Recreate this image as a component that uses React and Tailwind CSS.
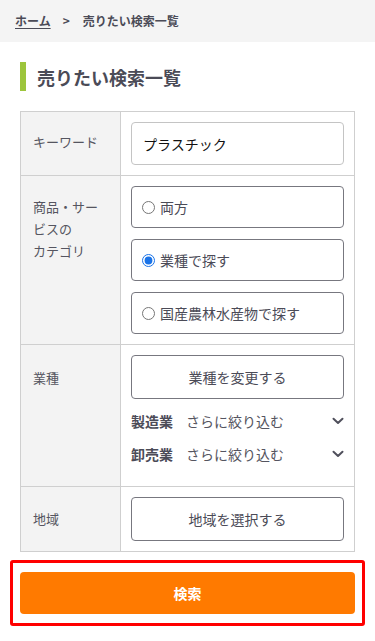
import { useState } from "react";

function Chevron() {
  return (
    <svg width="12" height="8" viewBox="0 0 12 8" className="shrink-0">
      <path d="M1.5 1.8 L6 6 L10.5 1.8" fill="none" stroke="#50505c" strokeWidth="2" strokeLinecap="round" strokeLinejoin="round" />
    </svg>
  );
}

export default function App() {
  const [category, setCategory] = useState("industry");
  const [keyword, setKeyword] = useState("プラスチック");

  const options = [
    { value: "both", label: "両方" },
    { value: "industry", label: "業種で探す" },
    { value: "agri", label: "国産農林水産物で探す" },
  ];

  return (
    <main className="min-h-[641px] bg-white text-[#4b4b57] font-['Noto_Sans_CJK_JP','Noto_Sans',sans-serif]">
      {/* Breadcrumb */}
      <nav className="h-[42px] bg-[#f4f4f4] flex items-center pl-[15px] text-[12px] font-bold text-[#4b4b57]">
        <a href="#" className="underline underline-offset-2">ホーム</a>
        <span className="ml-[12px] mr-[13px] text-[12px]">&gt;</span>
        <span>売りたい検索一覧</span>
      </nav>

      {/* Heading */}
      <div className="mx-5 mt-5 flex items-center h-[29px]">
        <div className="w-[6px] h-[29px] bg-[#9dc53c]"></div>
        <h1 className="ml-[11px] text-[18px] font-bold text-[#4b4b57] leading-none">売りたい検索一覧</h1>
      </div>

      {/* Form table */}
      <div className="mx-5 mt-5 border border-[#cfcfcf] text-[13px]">
        {/* Keyword */}
        <div className="flex border-b border-[#cfcfcf]">
          <div className="w-[100px] shrink-0 bg-[#f3f3f3] border-r border-[#cfcfcf] px-3 pt-[19px] leading-[22px] text-[#555560]">
            キーワード
          </div>
          <div className="flex-1 px-[10px] pt-[10px] pb-[10px]">
            <input
              value={keyword}
              onChange={(e) => setKeyword(e.target.value)}
              className="w-full h-[43px] border border-[#c4c4c4] rounded-[4px] px-[11px] text-[14px] text-[#111] outline-none"
            />
          </div>
        </div>

        {/* Category */}
        <div className="flex border-b border-[#cfcfcf]">
          <div className="w-[100px] shrink-0 bg-[#f3f3f3] border-r border-[#cfcfcf] px-3 pt-[20px] leading-[22px] text-[#555560]">
            商品・サー<br />ビスの<br />カテゴリ
          </div>
          <div className="flex-1 px-[10px] pt-[10px] pb-[10px] flex flex-col gap-[11px]">
            {options.map((o) => (
              <label
                key={o.value}
                className="h-[42px] border border-[#77777f] rounded-[4px] flex items-center pl-[10px] gap-[5px] text-[14px] text-[#4b4b57]"
              >
                <input
                  type="radio"
                  name="category"
                  checked={category === o.value}
                  onChange={() => setCategory(o.value)}
                  className="w-[13px] h-[13px] m-0 accent-[#1a73e8]"
                />
                {o.label}
              </label>
            ))}
          </div>
        </div>

        {/* Industry */}
        <div className="flex border-b border-[#cfcfcf]">
          <div className="w-[100px] shrink-0 bg-[#f3f3f3] border-r border-[#cfcfcf] px-3 pt-[22px] leading-[22px] text-[#555560]">
            業種
          </div>
          <div className="flex-1 px-[10px] pt-[10px] pb-[20px]">
            <button className="w-full h-[44px] border border-[#77777f] rounded-[4px] text-[14px] text-[#4b4b57] bg-white">
              業種を変更する
            </button>
            <div className="mt-[10px] flex flex-col gap-[9px]">
              {["製造業", "卸売業"].map((name) => (
                <div key={name} className="h-[24px] flex items-center text-[14px]">
                  <span className="font-bold text-[#4b4b57]">{name}</span>
                  <span className="ml-[13px] text-[#555560]">さらに絞り込む</span>
                  <span className="ml-auto"><Chevron /></span>
                </div>
              ))}
            </div>
          </div>
        </div>

        {/* Area */}
        <div className="flex">
          <div className="w-[100px] shrink-0 bg-[#f3f3f3] border-r border-[#cfcfcf] px-3 pt-[21px] leading-[22px] text-[#555560]">
            地域
          </div>
          <div className="flex-1 px-[10px] pt-[10px] pb-[10px]">
            <button className="w-full h-[44px] border border-[#77777f] rounded-[4px] text-[14px] text-[#4b4b57] bg-white">
              地域を選択する
            </button>
          </div>
        </div>
      </div>

      {/* Search button */}
      <div className="mx-[10px] mt-[8px] border-[3px] border-[#ff0000] rounded-[3px] px-[7px] py-[9px]">
        <button className="w-full h-[42px] bg-[#ff7a00] rounded-[4px] text-white font-bold text-[14px]">
          検索
        </button>
      </div>
    </main>
  );
}
